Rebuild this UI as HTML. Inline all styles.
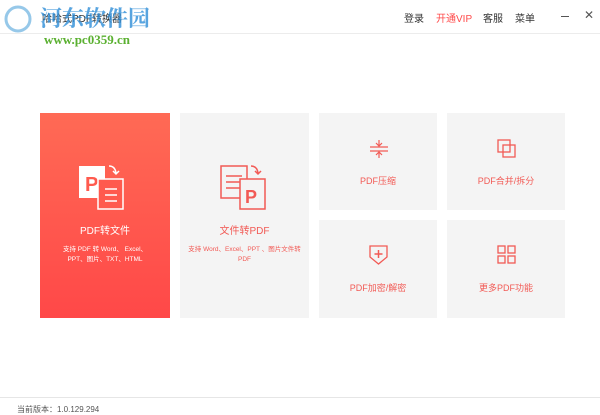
<!DOCTYPE html>
<html><head><meta charset="utf-8"><style>
*{margin:0;padding:0;box-sizing:border-box}
body{width:600px;height:415px;background:#fff;font-family:"Liberation Sans","Noto Sans CJK SC",sans-serif;position:relative;overflow:hidden}
.a{position:absolute}
.card{position:absolute;background:#f4f4f4;text-align:center;color:#f25a55}
.t{font-size:9px}
</style></head><body>
<div class="a" style="left:0;top:33px;width:600px;height:1px;background:#ececec"></div>
<svg class="a" style="left:4px;top:5px" width="30" height="30"><circle cx="14" cy="14" r="12" fill="none" stroke="#6ab0e0" stroke-width="3" opacity=".7"/></svg>
<div class="a" style="left:42px;top:10px;font-size:10px;color:#333">哈哈式PDF转换器</div>
<div class="a" style="left:40px;top:2px;font-size:22px;font-weight:bold;color:#2f8ed8;opacity:.8;font-family:'Noto Serif CJK SC',serif">河东软件园</div>
<div class="a" style="left:44px;top:32px;font-size:13px;font-weight:bold;color:#5ab030;font-family:'Liberation Serif',serif">www.pc0359.cn</div>
<div class="a" style="left:404px;top:10px;font-size:10px;color:#333">登录</div>
<div class="a" style="left:436px;top:10px;font-size:10px;color:#ff4b4b">开通VIP</div>
<div class="a" style="left:483px;top:10px;font-size:10px;color:#333">客服</div>
<div class="a" style="left:515px;top:10px;font-size:10px;color:#333">菜单</div>
<div class="a" style="left:561px;top:16px;width:8px;height:1px;background:#555"></div>
<div class="a" style="left:584px;top:8px;font-size:12px;color:#555">✕</div>

<div class="card" style="left:40px;top:113px;width:130px;height:205px;background:linear-gradient(#ff6a55,#ff4848);color:#fff">
<svg style="position:absolute;left:38px;top:50px" width="50" height="50" viewBox="0 0 50 50"><rect x="1" y="3" width="26" height="32" fill="#fff"/><text x="7" y="28" font-size="20" font-weight="bold" fill="#ff5a4e" font-family="Liberation Sans">P</text><rect x="20" y="16" width="25" height="30" fill="#ff5a4e" stroke="#fff" stroke-width="1.5"/><path d="M27 26h12M27 32h12M27 38h12" stroke="#fff" stroke-width="1.5"/><path d="M31 3q6 0 7 7M35 8l3 3 3-3" stroke="#fff" fill="none" stroke-width="1.5"/></svg>
<div class="a" style="left:0;width:130px;top:109px;font-size:10px">PDF转文件</div>
<div class="a" style="left:0;width:130px;top:132px;font-size:6.5px;line-height:10px">支持 PDF 转 Word、 Excel、<br>PPT、图片、TXT、HTML</div>
</div>
<div class="card" style="left:180px;top:113px;width:129px;height:205px">
<svg style="position:absolute;left:40px;top:50px" width="50" height="50" viewBox="0 0 50 50"><rect x="1" y="3" width="26" height="32" fill="#f4f4f4" stroke="#f25a55" stroke-width="1.5"/><path d="M6 13h16M6 19h16M6 25h16" stroke="#f25a55" stroke-width="1.5"/><rect x="20" y="16" width="25" height="30" fill="#f4f4f4" stroke="#f25a55" stroke-width="1.5"/><text x="25" y="40" font-size="18" font-weight="bold" fill="#f25a55" font-family="Liberation Sans">P</text><path d="M31 3q6 0 7 7M35 8l3 3 3-3" stroke="#f25a55" fill="none" stroke-width="1.5"/></svg>
<div class="a" style="left:0;width:129px;top:109px;font-size:10px">文件转PDF</div>
<div class="a" style="left:6px;width:117px;top:132px;font-size:6.5px;line-height:10px">支持 Word、Excel、PPT 、图片文件转 PDF</div>
</div>
<div class="card" style="left:319px;top:113px;width:118px;height:97px">
<svg style="position:absolute;left:50px;top:26px" width="20" height="20"><path d="M1 8h18M1 12h18M10 1v6M7 4l3 3 3-3M10 19v-6M7 16l3-3 3 3" stroke="#f25a55" fill="none" stroke-width="1.2"/></svg>
<div class="a t" style="left:0;width:118px;top:61px">PDF压缩</div></div>
<div class="card" style="left:447px;top:113px;width:118px;height:97px">
<svg style="position:absolute;left:50px;top:26px" width="20" height="20"><rect x="1" y="1" width="12" height="12" fill="none" stroke="#f25a55" stroke-width="1.3"/><rect x="6" y="6" width="12" height="12" fill="none" stroke="#f25a55" stroke-width="1.3"/></svg>
<div class="a t" style="left:0;width:118px;top:61px">PDF合并/拆分</div></div>
<div class="card" style="left:319px;top:220px;width:118px;height:98px">
<svg style="position:absolute;left:50px;top:24px" width="20" height="22"><path d="M1 2h17v11l-8.5 7L1 13z" fill="none" stroke="#f25a55" stroke-width="1.3"/><path d="M9.5 6v8M5.5 10h8" stroke="#f25a55" stroke-width="1.5"/></svg>
<div class="a t" style="left:0;width:118px;top:61px">PDF加密/解密</div></div>
<div class="card" style="left:447px;top:220px;width:118px;height:98px">
<svg style="position:absolute;left:50px;top:25px" width="20" height="20"><rect x="1" y="1" width="7" height="7" fill="none" stroke="#f25a55" stroke-width="1.3"/><rect x="11" y="1" width="7" height="7" fill="none" stroke="#f25a55" stroke-width="1.3"/><rect x="1" y="11" width="7" height="7" fill="none" stroke="#f25a55" stroke-width="1.3"/><rect x="11" y="11" width="7" height="7" fill="none" stroke="#f25a55" stroke-width="1.3"/></svg>
<div class="a t" style="left:0;width:118px;top:61px">更多PDF功能</div></div>

<div class="a" style="left:0;top:397px;width:600px;height:1px;background:#e6e6e6"></div>
<div class="a" style="left:17px;top:404px;font-size:8px;color:#555">当前版本：1.0.129.294</div>
</body></html>
